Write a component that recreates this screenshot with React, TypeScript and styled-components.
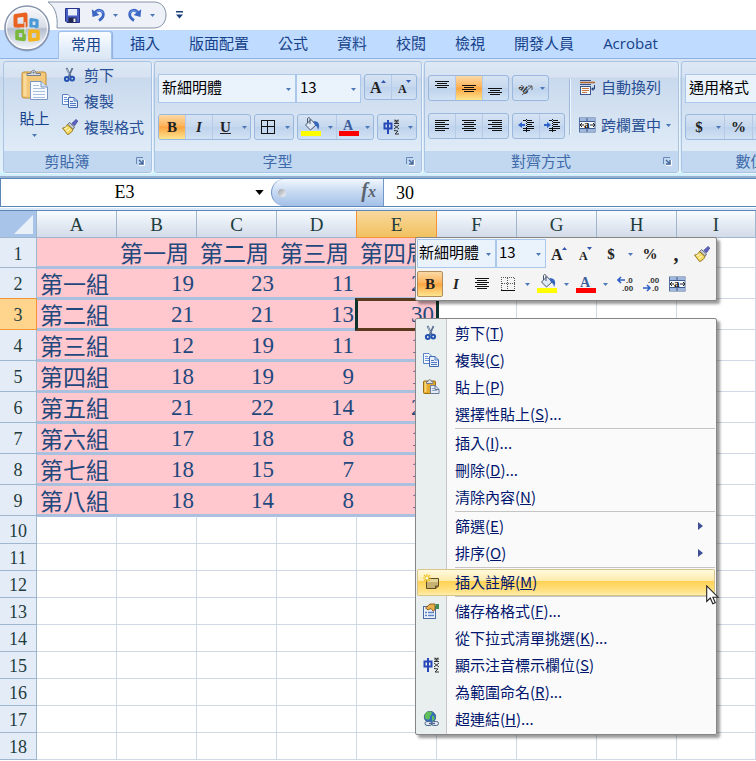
import React from "react";
import styled, { createGlobalStyle, css } from "styled-components";

const UI = '"Noto Sans CJK TC", "Open Sans", sans-serif';
const SERIF = '"Liberation Serif", "Noto Sans CJK TC", serif';

const GlobalStyle = createGlobalStyle`
  * { box-sizing: border-box; }
  body { margin: 0; background: #fff; font-family: ${UI}; font-size: 15px; line-height: 20px; overflow: hidden; }
  button, input, select { font: inherit; color: inherit; margin: 0; padding: 0; border: 0; background: none; border-radius: 0; outline: none; }
  svg { display: block; flex: none; }
`;

/* ---------- frame ---------- */

const Page = styled.div`
  position: relative;
  min-height: 100vh;
  overflow: hidden;
`;

const TitleBar = styled.header`
  position: relative;
  height: 30px;
  display: flex;
  align-items: center;
  padding-left: 48px;
`;

const OfficeButton = styled.button`
  position: absolute;
  left: 3px;
  top: 4px;
  z-index: 2;
`;

const QuickAccess = styled.div`
  position: relative;
  width: 120px;
  height: 30px;
  display: flex;
  align-items: center;
  padding-left: 16px;
  > svg { position: absolute; left: 0; top: 1px; }
`;

const QuickButton = styled.button<{ $w: number }>`
  position: relative;
  display: flex;
  align-items: center;
  justify-content: center;
  width: ${(p) => p.$w}px;
  height: 24px;
`;

const Tabs = styled.nav`
  display: flex;
  gap: 1px;
  height: 29px;
  padding: 0 0 0 57px;
  background: #bfdbff;
  border-bottom: 1px solid #8db2e3;
`;

const Tab = styled.button<{ $active?: boolean; $latin?: boolean }>`
  height: 28px;
  padding: 0 14px 2px;
  color: #15428b;
  white-space: nowrap;
  ${(p) => p.$latin && css`font-family: "Open Sans", sans-serif;`}
  ${(p) =>
    p.$active &&
    css`
      margin: 1px 3px 0 1px;
      padding: 0 10px 4px 12px;
      border: 1px solid #9fc0ea;
      border-bottom: 0;
      border-radius: 3px 3px 0 0;
      background: linear-gradient(#fbfdff, #e4eefb 60%, #dbe6f4);
      box-shadow: 1px 0 1px #8fb0dc;
    `}
`;

const Ribbon = styled.div`
  display: flex;
  gap: 2px;
  padding: 2px 3px 1px;
  height: 119px;
  overflow: hidden;
  background: linear-gradient(#dbe6f4 0, #d5e1f2 17px, #c8d9ed 18px, #e3f2fb 112px, #c8f5ff 115px, #dbe9f8 117px, #94afd0 117px, #94afd0 119px);
`;

const GroupBox = styled.section<{ $min?: number }>`
  flex: none;
  display: flex;
  flex-direction: column;
  height: 112px;
  min-width: ${(p) => p.$min ?? 0}px;
  border: 1px solid #a9c4e2;
  border-radius: 3px;
  box-shadow: 1px 1px 0 #eef5fc;
  overflow: hidden;
  background: linear-gradient(#dee8f5 0, #d6e2f2 15px, #c9d9ed 16px, #dfebf7 89px);
`;

const GroupBody = styled.div<{ $top: number }>`
  flex: 1;
  display: flex;
  padding: ${(p) => p.$top}px 4px 0 3px;
`;

const GroupTitle = styled.div`
  display: flex;
  align-items: center;
  height: 21px;
  padding: 0 6px 1px 0;
  background: #c1d8f0;
  color: #3e6aaa;
  > span { flex: 1; text-align: center; margin-right: 6px; }
`;

const Launcher = styled.button`
  display: flex;
  align-items: center;
`;

const Stack = styled.div<{ $gap?: number }>`
  display: flex;
  flex-direction: column;
  gap: ${(p) => p.$gap ?? 0}px;
`;

const Row = styled.div<{ $gap?: number; $h?: number }>`
  display: flex;
  align-items: flex-start;
  gap: ${(p) => p.$gap ?? 0}px;
  ${(p) => p.$h && css`height: ${p.$h}px;`}
`;

const PasteButton = styled.button`
  display: flex;
  flex-direction: column;
  align-items: center;
  width: 55px;
  padding-top: 6px;
  color: #15428b;
  > span { margin: 7px 0 6px; }
`;

const SideButton = styled.button<{ $gap?: number }>`
  display: flex;
  align-items: center;
  gap: ${(p) => p.$gap ?? 6}px;
  height: 26px;
  padding-bottom: 2px;
  color: #284f94;
  white-space: nowrap;
`;

const Cluster = styled.div`
  display: flex;
  height: 26px;
  border: 1px solid #9ab8dd;
  border-radius: 3px;
  overflow: hidden;
  background: linear-gradient(#d6e3f3, #c6d8ee 50%, #bdd2ec 51%, #d2e2f4);
  > * + * { border-left: 1px solid #b4cae6; }
`;

const activeFill = css`
  background: linear-gradient(#fbd9a5, #fdb45c 45%, #fca440 50%, #fde58f);
`;

const Tool = styled.button<{ $w: number; $active?: boolean; $size?: number }>`
  display: flex;
  align-items: center;
  justify-content: center;
  width: ${(p) => p.$w}px;
  height: 24px;
  font-family: ${SERIF};
  font-size: ${(p) => p.$size ?? 15}px;
  font-weight: bold;
  color: #222;
  ${(p) => p.$active && activeFill}
`;

const Arrow = styled.button`
  && { border-left: 0; }
  display: flex;
  align-items: center;
  justify-content: center;
  width: 12px;
  height: 24px;
`;

const Combo = styled.div<{ $w: number; $pad?: number }>`
  position: relative;
  width: ${(p) => p.$w}px;
  height: 29px;
  border: 1px solid #abc7ec;
  background: #eaf2fb;
  color: #000;
  select { width: 100%; height: 23px; padding-left: ${(p) => p.$pad ?? 3}px; appearance: none; }
  svg { position: absolute; right: 4px; top: 13px; pointer-events: none; }
`;

const Divider = styled.div`
  width: 2px;
  height: 56px;
  margin: 4px 8px 0 4px;
  background: linear-gradient(90deg, #9fb9da 50%, #f0f6fd 50%);
`;

/* ---------- formula bar ---------- */

const FormulaBar = styled.div`
  display: flex;
  height: 29px;
  border: solid #5d87b8;
  border-width: 1px 0 1px 1px;
  background: #fff;
  font-family: ${SERIF};
  font-size: 18px;
  color: #000;
`;

const NameBox = styled.div`
  display: flex;
  align-items: center;
  width: 270px;
  input { flex: 1; min-width: 0; height: 27px; text-align: center; }
  button { width: 23px; height: 26px; display: flex; align-items: center; justify-content: center; }
`;

const FxStrip = styled.div`
  display: flex;
  align-items: center;
  justify-content: space-between;
  width: 113px;
  padding: 0 7px 0 6px;
  border: solid #6f97c8;
  border-width: 0 1px;
  border-radius: 14px 0 0 14px;
  background: linear-gradient(#f2f7fd, #c9dbf2 45%, #a3c0e8);
`;

const Knob = styled.i`
  width: 8px;
  height: 8px;
  border-radius: 4px;
  background: linear-gradient(135deg, #9aa0aa, #f6f8fa);
`;

const FxButton = styled.button`
  padding-bottom: 3px;
  font-family: ${SERIF};
  font-size: 20px;
  font-weight: bold;
  font-style: italic;
  color: #5b6470;
  small { font-size: 16px; }
`;

const FormulaInput = styled.input`
  flex: 1;
  min-width: 0;
  && { padding-left: 12px; }
`;

const Gutter = styled.div`
  height: 4px;
  background: #dbe8f8;
  border-bottom: 1px solid #5d87b8;
  border-top: 1px solid #fff;
`;

/* ---------- sheet ---------- */

const Sheet = styled.table`
  width: 100%;
  table-layout: fixed;
  border-collapse: separate;
  border-spacing: 0;
  line-height: 24px;
  th, td { padding: 0; overflow: visible; white-space: nowrap; }
`;

const HeadCol = styled.col` width: 37px; `;
const Col = styled.col` width: 80px; `;

const Corner = styled.th`
  height: 27px;
  background: #a9c4e9;
  border: solid #9eb6ce;
  border-width: 0 1px 1px 0;
  svg { margin: 2px 0 0 13px; }
`;

const ColHead = styled.th<{ $on?: boolean; $before?: boolean }>`
  font: 19px/24px ${SERIF};
  color: #1f3d3d;
  background: ${(p) => (p.$on ? "linear-gradient(#f9d99f, #f1c15f)" : "linear-gradient(#f8fcff, #e4ebf3 50%, #d3dbe9)")};
  border-right: 1px solid ${(p) => (p.$on || p.$before ? "#f29436" : "#9eb6ce")};
  border-bottom: 1px solid ${(p) => (p.$on ? "#f29436" : "#9eb6ce")};
  && { padding-top: 2px; }
`;

const RowHead = styled.th<{ $on?: boolean; $before?: boolean; $h: number }>`
  height: ${(p) => p.$h}px;
  font: 18px/24px ${SERIF};
  color: #1f3d3d;
  background: ${(p) => (p.$on ? "#ffd58d" : "#e4ecf7")};
  border-right: 1px solid ${(p) => (p.$on ? "#f29436" : "#9eb6ce")};
  border-bottom: 1px solid ${(p) => (p.$on || p.$before ? "#f29436" : "#9eb6ce")};
  && { padding-top: 2px; }
`;

const Cell = styled.td<{ $underData?: boolean }>`
  border: solid #d0d7e5;
  border-width: 0 1px 1px 0;
  ${(p) => p.$underData && css`border-top: 1px solid #a9c1df;`}
`;

const DataCell = styled.td<{ $kind: "text" | "number"; $first?: boolean }>`
  position: relative;
  background: #ffc7ce;
  color: #1f497d;
  border-bottom: 2px solid #a9c1df;
  border-top: ${(p) => (p.$first ? 0 : 1)}px solid #a9c1df;
  ${(p) =>
    p.$kind === "number"
      ? css`font: 23px/24px ${SERIF}; text-align: right; && { padding: 1px 3px 0 0; }`
      : css`font: 23px/24px ${UI}; && { padding: 0 0 0 3px; }`}
`;

const Selection = styled.i`
  position: absolute;
  left: -2px;
  right: -2px;
  top: -2px;
  bottom: -3px;
  border: 3px solid #0b332d;
  border-top-color: #5a3a1e;
  border-bottom-color: #5a3a1e;
  z-index: 1;
`;

/* ---------- floating panels ---------- */

const MiniToolbar = styled.div`
  position: absolute;
  left: 415px;
  top: 237px;
  z-index: 3;
  width: 302px;
  padding: 1px;
  border: 1px solid #868686;
  border-radius: 2px;
  background: #f4f4f4;
  box-shadow: 3px 3px 3px rgba(0, 0, 0, 0.4);
  ${Tool} { height: 28px; }
  ${Arrow} { width: 13px; height: 28px; }
  ${Combo} { align-self: flex-start; }
`;

const MiniRow = styled.div`
  display: flex;
  align-items: center;
  height: 30px;
`;

const MiniActive = styled(Tool)`
  && { height: 26px; border: 1px solid #b08d5a; border-radius: 2px; }
`;

const Menu = styled.div`
  position: absolute;
  left: 415px;
  top: 318px;
  z-index: 3;
  width: 302px;
  padding: 1px;
  border: 1px solid #868686;
  border-radius: 2px;
  background: linear-gradient(90deg, #e9eeee 30px, #c5c5c5 30px, #c5c5c5 31px, #fafafa 31px);
  box-shadow: 3px 3px 3px rgba(0, 0, 0, 0.4);
`;

const MenuItem = styled.button<{ $hot?: boolean }>`
  position: relative;
  display: flex;
  align-items: center;
  width: 100%;
  height: 27px;
  padding-bottom: 2px;
  color: #00156e;
  text-align: left;
  ${(p) =>
    p.$hot &&
    css`
      background: linear-gradient(#fffbe4, #ffeaa8 45%, #ffd253 46%, #ffe38c 85%, #fff3b5);
      box-shadow: inset 0 0 0 1px #d9c48b;
      border-radius: 2px;
    `}
`;

const MenuIcon = styled.span`
  width: 38px;
  padding-left: 6px;
`;

const MenuLabel = styled.span`
  flex: 1;
`;

const SubArrow = styled.span`
  margin-right: 12px;
`;

const MenuRule = styled.hr`
  height: 2px;
  margin: 0 0 0 38px;
  border: 0;
  border-top: 1px solid #c5c5c5;
`;

const Pointer = styled.span`
  position: absolute;
  right: -4px;
  top: 16px;
  z-index: 4;
`;

/* ---------- icons ---------- */

const Caret = ({ color = "#4a78b8", w = 5 }: { color?: string; w?: number }) => (
  <svg width={w} height={w === 5 ? 3 : 5} viewBox="0 0 10 6"><path d="M0 0H10L5 6Z" fill={color} /></svg>
);

const CutIcon = () => (
  <svg width="16" height="16" viewBox="0 0 16 16" fill="none">
    <path d="M4.500 1L9 10M10.500 1L6.500 10" stroke="#5a6f90" strokeWidth="1.800" />
    <path d="M5 2L7.200 7" stroke="#c3cede" strokeWidth=".8" />
    <circle cx="4.800" cy="12" r="1.900" stroke="#2452b0" strokeWidth="2" />
    <circle cx="10.200" cy="11.600" r="1.900" stroke="#2452b0" strokeWidth="2" />
  </svg>
);

const CopyIcon = () => (
  <svg width="16" height="16" viewBox="0 0 16 16">
    <path d="M.5 1.500H6L8.500 4V11.500H.5Z" fill="#f4f8ff" stroke="#5b82c4" />
    <path d="M2 4.500H5M2 6.500H6M2 8.500H6" stroke="#6d94d4" />
    <path d="M6.500 4.500H12L15.500 8V14.500H6.500Z" fill="#e8f0ff" stroke="#3f68b0" />
    <path d="M12 4.500V8H15.500M8 8.500H11M8 10.500H14M8 12.500H14" stroke="#4f7ac2" fill="none" />
  </svg>
);

const BrushIcon = () => (
  <svg width="16" height="16" viewBox="0 0 16 16">
    <path d="M14 .5L15.800 2L12.500 6.800L9.800 4.500Z" fill="#5a5fc0" stroke="#474a9a" strokeWidth=".8" />
    <path d="M7.500 3.500L12.500 8L11 10.500L5.500 5.500Z" fill="#c3c8d1" stroke="#5f6470" strokeWidth=".9" />
    <path d="M5.500 5.500L11 10.500C10 13 8 15 5.500 15.500L.5 9C3 8.800 4.500 7.500 5.500 5.500Z" fill="#f3d75f" stroke="#8d6c14" strokeWidth=".9" />
    <path d="M2.500 9.800L5.500 8.300M4.500 12.500L8 10" stroke="#fff6bf" strokeWidth="1.400" />
  </svg>
);

const PasteBigIcon = () => (
  <svg width="28" height="32" viewBox="0 0 28 32">
    <rect x="1" y="3" width="24" height="26" rx="2" fill="#f3c878" stroke="#c08d38" />
    <rect x="2.500" y="5" width="3" height="22" fill="#f9dc9c" />
    <path d="M6 6.500V4.500H10C10 .2 15 .2 15 4.500H19.500V6.500Z" fill="#d5dce6" stroke="#77808d" />
    <circle cx="12.500" cy="3.500" r="1" fill="#6b7480" />
    <path d="M9.500 12.500H20L26.500 18V30.500H9.500Z" fill="#f7faff" stroke="#7b97c2" />
    <path d="M20 12.500V18H26.500" fill="#d6e3f6" stroke="#7b97c2" />
    <path d="M12 16.500H18M12 19.500H24M12 22.500H24M12 25.500H24M12 28.500H24" stroke="#a9bfe0" />
  </svg>
);

const PasteIcon = () => (
  <svg width="17" height="16" viewBox="0 0 17 16">
    <rect x=".5" y="2" width="12" height="12.500" rx="1" fill="#e5ab2e" stroke="#9c6d12" />
    <rect x="1.500" y="3" width="2" height="10" fill="#f9d878" />
    <path d="M3.500 4.500V2.500H5C5 .2 8.500 .2 8.500 2.500H10V4.500Z" fill="#dfe3e8" stroke="#6f7276" strokeWidth=".9" />
    <path d="M7.500 6.500H12L16 10.500V14.500H7.500Z" fill="#e6ecf6" stroke="#6a7c9c" />
    <path d="M9 9.500H12M9 11.500H14" stroke="#92a3c0" />
    <path d="M12 6.500V10.500H16" fill="none" stroke="#6a7c9c" />
  </svg>
);

const SaveIcon = () => (
  <svg width="15" height="15" viewBox="0 0 15 15">
    <path d="M.5 .5H14.500V14.500H2L.5 13Z" fill="#4a5fc4" stroke="#27338a" />
    <rect x="3" y="1" width="9" height="6.500" fill="#e9effc" />
    <rect x="3.500" y="9.500" width="8" height="5" fill="#22264a" />
    <rect x="8.500" y="10.500" width="2" height="3.500" fill="#e9effc" />
  </svg>
);

const UndoIcon = ({ flip }: { flip?: boolean }) => (
  <svg width="15" height="14" viewBox="0 0 15 14">
    <g transform={flip ? "translate(15 0) scale(-1 1)" : undefined}>
      <path d="M4 5C6 1 12 1.500 12.300 6C12.500 8.500 10.500 11 8 12.500" fill="none" stroke="#3b66c4" strokeWidth="2.800" />
      <path d="M.8 1.300L1.500 9L8.500 7Z" fill="#3b66c4" />
      <path d="M5 4.500C7 2 11 2.200 11.800 5" fill="none" stroke="#8fb2ee" strokeWidth=".8" />
    </g>
  </svg>
);

const OfficeLogo = () => (
  <svg width="48" height="48" viewBox="0 0 48 48">
    <defs>
      <linearGradient id="orb" x1="0" y1="0" x2="0" y2="1">
        <stop offset="0" stopColor="#fafbfd" />
        <stop offset=".48" stopColor="#d8dde7" />
        <stop offset=".52" stopColor="#b4becf" />
        <stop offset="1" stopColor="#f6f9fd" />
      </linearGradient>
    </defs>
    <circle cx="24" cy="25" r="22.500" fill="#6f87ab" opacity=".55" />
    <circle cx="24" cy="24" r="22" fill="url(#orb)" stroke="#8795ae" strokeWidth="1.500" />
    <circle cx="24" cy="24" r="20.500" fill="none" stroke="#fff" strokeWidth="1.200" opacity=".8" />
    <g fill="none" strokeWidth="4" strokeLinejoin="round">
      <path d="M12.500 12L22.500 10.500V22L12.500 21.500Z" stroke="#e9621f" />
      <path d="M28 15.500L34 16.500V22.500L28 22.500Z" stroke="#4b9ad6" strokeWidth="3.200" />
      <path d="M14 27.500L21 27V35.500L14 34.500Z" stroke="#7ab83c" strokeWidth="3.600" />
      <path d="M27 27L35 27.500V35L27 36Z" stroke="#f3b51f" strokeWidth="3.600" />
    </g>
    <path d="M22 18V30M17 24H32" stroke="#e4e8ef" strokeWidth="1.200" />
  </svg>
);

type AlignKind = "left" | "center" | "right";
const Lines = ({ kind = "center", rows = 6, dy = 0 }: { kind?: AlignKind; rows?: number; dy?: number }) => (
  <svg width="15" height="15" viewBox="0 0 15 15" shapeRendering="crispEdges">
    {Array.from({ length: rows }, (_, i) => {
      const w = i % 2 ? 10 : 14;
      const x = kind === "left" ? 0 : kind === "right" ? 14 - w : (14 - w) >> 1;
      return <rect key={i} x={x} y={i * 2 + 1 + dy} width={w} height="1" fill="#111" />;
    })}
  </svg>
);

const IndentIcon = ({ out }: { out?: boolean }) => (
  <svg width="17" height="14" viewBox="0 0 17 14" shapeRendering="crispEdges">
    <path d="M5 1.500H8M9 1.500H14M9 3.500H16M9 5.500H14M9 7.500H16M5 9.500H16M5 11.500H12" stroke="#111" />
    <path d="M8.500 0V14" stroke="#111" strokeDasharray="1 1" />
    <path d={out ? "M7 6H3" : "M0 6H4"} stroke="#2f62c8" strokeWidth="2" />
    <path d={out ? "M4 3L0 6L4 9Z" : "M3 3L7 6L3 9Z"} fill="#2f62c8" shapeRendering="auto" />
  </svg>
);

const OrientationIcon = () => (
  <svg width="17" height="16" viewBox="0 0 17 16">
    <text x="2" y="8" fontFamily="Liberation Serif" fontSize="10" fontWeight="bold" fill="#333" transform="rotate(40 2 8)">ab</text>
    <path d="M6 15L16 6M16 10V6H12" fill="none" stroke="#555" />
  </svg>
);

const WrapIcon = () => (
  <svg width="17" height="16" viewBox="0 0 17 16">
    <path d="M1 1.500H12M1 5.500H12" stroke="#3a5488" />
    <path d="M1 3.500H16" stroke="#b5652b" strokeWidth="1.500" />
    <rect x="1.500" y="7.500" width="10" height="8" fill="#f4f8ff" stroke="#3a5488" />
    <path d="M3 9.500H10M3 11.500H10M3 13.500H8" stroke="#c2763d" />
    <path d="M15.500 6V10H13" fill="none" stroke="#27407a" />
    <path d="M14.500 8L12 10L14.500 12Z" fill="#27407a" />
  </svg>
);

const MergeIcon = () => (
  <svg width="17" height="16" viewBox="0 0 17 16">
    <rect x=".5" y="1" width="15.500" height="14" fill="#f7faff" stroke="#55709f" />
    <path d="M1 1.500H16V4H1ZM1 12H16V14.500H1Z" fill="#9db7dd" />
    <path d="M.5 4.500H16M.5 11.500H16M8 1V4.500M8 11.500V15" stroke="#3f5a8c" />
    <path d="M1 8H5M11 8H16M3 6L1 8L3 10M14 6L16 8L14 10" fill="none" stroke="#222" />
    <text x="5" y="11" fontFamily="Liberation Serif" fontSize="11" fontWeight="bold" fill="#111">a</text>
  </svg>
);

const BorderIcon = ({ dotted }: { dotted?: boolean }) => (
  <svg width="14" height="14" viewBox="0 0 14 14" fill="none" shapeRendering="crispEdges">
    <path d="M.5 13V.5H13.500V13M6.500 .5V13M.5 6.500H13.500" stroke={dotted ? "#555" : "#111"} strokeDasharray={dotted ? "1 1" : undefined} />
    <path d="M0 13.500H14" stroke="#111" />
  </svg>
);

const BucketIcon = () => (
  <svg width="20" height="20" viewBox="0 0 20 20">
    <path d="M4.500 8L10 2.500L15 8L9.500 13Z" fill="#dfe8f5" stroke="#47546c" />
    <path d="M9 7V2C9 0 6.500 0 6.500 2V6" fill="none" stroke="#47546c" />
    <path d="M12.500 4C18 4 19.500 8 17 13C16.500 10 15.500 9 14 8.500Z" fill="#3767bb" />
    <rect x="0" y="14" width="20" height="5" fill="#ff0" />
  </svg>
);

const FontColorIcon = () => (
  <svg width="20" height="20" viewBox="0 0 20 20">
    <text x="4" y="13" fontFamily="Liberation Serif" fontSize="14" fontWeight="bold" fill="#3b5c9c">A</text>
    <rect x="0" y="14" width="20" height="5" fill="#f00" />
  </svg>
);

const PhoneticIcon = () => (
  <svg width="17" height="16" viewBox="0 0 17 16" fill="none">
    <path d="M5 1V15M1.500 4.500H8.500V9.500H1.500Z" stroke="#2747b8" strokeWidth="2" />
    <path d="M11 2H16M11 4.500H16M12 .5L15 5M15 .5L12 5M11 6L16 10M16 6L11 10M11 11.500L15 12L12 15H16" stroke="#333" />
  </svg>
);

const DecimalIcon = ({ more }: { more?: boolean }) => (
  <svg width="17" height="18" viewBox="0 0 17 18">
    <text x={more ? 9 : 5} y="8" fontFamily="Liberation Sans" fontSize="8" fontWeight="bold" fill="#333">{more ? ".0" : ".00"}</text>
    <text x={more ? 5 : 9} y="16" fontFamily="Liberation Sans" fontSize="8" fontWeight="bold" fill="#333">{more ? ".00" : ".0"}</text>
    <path d={more ? "M8 5H2M4 2L1 5L4 8" : "M0 13H6M4 10L7 13L4 16"} fill="none" stroke="#2f62c8" strokeWidth="1.600" />
  </svg>
);

const CommentIcon = () => (
  <svg width="17" height="16" viewBox="0 0 17 16">
    <path d="M3.500 4.500H15.500V12L13 14.500H3.500Z" fill="#c7b172" stroke="#5d4d23" />
    <path d="M4 5H15V8H4Z" fill="#e6d798" />
    <path d="M12.500 14.500V12H15.500" fill="#8f7a3e" stroke="#5d4d23" />
    <path d="M4 0V8M0 4H8M1 1L7 7M7 1L1 7" stroke="#f0c020" strokeWidth="1.100" />
    <circle cx="4" cy="4" r="1.500" fill="#fffbd0" />
  </svg>
);

const FormatIcon = () => (
  <svg width="17" height="16" viewBox="0 0 17 16">
    <rect x=".5" y="3.500" width="12" height="12" fill="#eef4fc" stroke="#4a6aa6" />
    <path d="M2 9.500H4M5 9.500H11M2 12.500H4M5 12.500H11" stroke="#5b82c4" strokeWidth="1.400" />
    <path d="M2.500 5L7 1L12 1V6L10.500 8.500L8 5.500L5 7Z" fill="#e8b04c" stroke="#80541a" strokeWidth=".9" />
    <rect x="12.500" y="1" width="3.500" height="5" fill="#3f8a57" />
  </svg>
);

const LinkIcon = () => (
  <svg width="17" height="16" viewBox="0 0 17 16" fill="none">
    <circle cx="7" cy="6" r="5.700" fill="#2f6fbd" stroke="#4d6f8f" />
    <path d="M2 3C4 0 8 0 9 2C8 5 6 5 7 7C6 10 3 8 2 7ZM9 5C11 4 12 6 11 9L9 10Z" fill="#5fc05a" />
    <rect x="2" y="10.500" width="7" height="4" rx="2" fill="#dfe8f3" stroke="#50698f" />
    <rect x="8.500" y="10.500" width="7" height="4" rx="2" fill="#dfe8f3" stroke="#50698f" />
    <path d="M6 12.500H12" stroke="#50698f" strokeWidth="1.400" />
  </svg>
);

const LauncherIcon = () => (
  <svg width="9" height="9" viewBox="0 0 9 9" fill="none">
    <path d="M.5 7V.5H7" stroke="#6889b4" />
    <path d="M8.500 3V8.500H3" stroke="#fff" />
    <path d="M3 3L7 7M7 3V7H3" stroke="#49699a" strokeWidth="1.400" />
  </svg>
);

const PointerIcon = () => (
  <svg width="13" height="20" viewBox="0 0 13 20">
    <path d="M.7 .9V16.500L4.300 13L6.800 18.800L9.300 17.700L6.900 12.200H12Z" fill="#fff" stroke="#222" strokeWidth="1.100" />
  </svg>
);

const Grow = ({ down }: { down?: boolean }) => (
  <svg width="18" height="20" viewBox="0 0 18 20">
    <text x={down ? 3 : 1} y="16" fontFamily="Liberation Serif" fontSize={down ? 12 : 16} fontWeight="bold" fill="#222">A</text>
    <path d={down ? "M11 3H16L13.500 6Z" : "M12 6H17L14.500 3Z"} fill="#3355b0" />
  </svg>
);

/* ---------- composed parts ---------- */

const Group = ({ title, top, min, children }: { title: string; top: number; min?: number; children: React.ReactNode }) => (
  <GroupBox $min={min} aria-label={title}>
    <GroupBody $top={top}>{children}</GroupBody>
    <GroupTitle>
      <span>{title}</span>
      <Launcher aria-label={`${title}設定`}><LauncherIcon /></Launcher>
    </GroupTitle>
  </GroupBox>
);

const Select = ({ label, value, w, pad }: { label: string; value: string; w: number; pad?: number }) => (
  <Combo $w={w} $pad={pad}>
    <select aria-label={label} defaultValue={value}><option>{value}</option></select>
    <Caret />
  </Combo>
);

const More = ({ label }: { label: string }) => <Arrow aria-label={label}><Caret /></Arrow>;

const tabs = ["常用", "插入", "版面配置", "公式", "資料", "校閱", "檢視", "開發人員", "Acrobat"];
const columns = ["A", "B", "C", "D", "E", "F", "G", "H", "I"];
const data: (string | number)[][] = [
  ["", "第一周", "第二周", "第三周", "第四周"],
  ["第一組", 19, 23, 11, 22],
  ["第二組", 21, 21, 13, 30],
  ["第三組", 12, 19, 11, 15],
  ["第四組", 18, 19, 9, 15],
  ["第五組", 21, 22, 14, 20],
  ["第六組", 17, 18, 8, 14],
  ["第七組", 18, 15, 7, 12],
  ["第八組", 18, 14, 8, 13],
];
const rowHeight = (n: number) => (n === 1 ? 30 : n < 10 ? 31 : n === 10 ? 28 : 27);

type Item = { text: string; key: string; tail?: string; icon?: React.ReactNode; sub?: boolean; hot?: boolean };
const menu: Item[][] = [
  [
    { text: "剪下", key: "T", icon: <CutIcon /> },
    { text: "複製", key: "C", icon: <CopyIcon /> },
    { text: "貼上", key: "P", icon: <PasteIcon /> },
    { text: "選擇性貼上", key: "S", tail: "..." },
  ],
  [
    { text: "插入", key: "I", tail: "..." },
    { text: "刪除", key: "D", tail: "..." },
    { text: "清除內容", key: "N" },
  ],
  [
    { text: "篩選", key: "E", sub: true },
    { text: "排序", key: "O", sub: true },
  ],
  [{ text: "插入註解", key: "M", icon: <CommentIcon />, hot: true }],
  [
    { text: "儲存格格式", key: "F", tail: "...", icon: <FormatIcon /> },
    { text: "從下拉式清單挑選", key: "K", tail: "..." },
    { text: "顯示注音標示欄位", key: "S", icon: <PhoneticIcon /> },
    { text: "為範圍命名", key: "R", tail: "..." },
    { text: "超連結", key: "H", tail: "...", icon: <LinkIcon /> },
  ],
];

const TopBar = () => (
  <TitleBar>
    <OfficeButton aria-label="Office"><OfficeLogo /></OfficeButton>
    <QuickAccess>
      <svg width="120" height="28" viewBox="0 0 120 28">
        <path d="M0 1H106C122 1 122 27 106 27H9C10 14 7 6 0 1Z" fill="#eef2f8" stroke="#8592a6" />
      </svg>
      <QuickButton $w={17} aria-label="儲存檔案"><SaveIcon /></QuickButton>
      <QuickButton $w={34} aria-label="復原"><UndoIcon /></QuickButton>
      <QuickButton $w={1} aria-label="復原清單"><Caret /></QuickButton>
      <QuickButton $w={36} aria-label="取消復原"><UndoIcon flip /></QuickButton>
      <QuickButton $w={1} aria-label="取消復原清單"><Caret /></QuickButton>
    </QuickAccess>
    <QuickButton $w={22} aria-label="自訂快速存取工具列">
      <svg width="7" height="8" viewBox="0 0 7 8"><path d="M0 0H7V1.500H0ZM0 3.500H7L3.500 7.500Z" fill="#1c3f7c" /></svg>
    </QuickButton>
  </TitleBar>
);

const RibbonArea = () => (
  <Ribbon>
    <Group title="剪貼簿" top={1} min={149}>
      <PasteButton><PasteBigIcon /><span>貼上</span><Caret /></PasteButton>
      <Stack>
        <SideButton><CutIcon />剪下</SideButton>
        <SideButton><CopyIcon />複製</SideButton>
        <SideButton><BrushIcon />複製格式</SideButton>
      </Stack>
    </Group>
    <Group title="字型" top={12} min={268}>
      <Stack $gap={11}>
        <Row $h={29} $gap={3}>
          <Row>
            <Select label="字型" value="新細明體" w={138} />
            <Select label="字型大小" value="13" w={65} />
          </Row>
          <Cluster>
            <Tool $w={26} aria-label="放大字型"><Grow /></Tool>
            <Tool $w={25} aria-label="縮小字型"><Grow down /></Tool>
          </Cluster>
        </Row>
        <Row $gap={3}>
          <Cluster>
            <Tool $w={26} $active aria-label="粗體">B</Tool>
            <Tool $w={27} aria-label="斜體"><em>I</em></Tool>
            <Tool $w={26} aria-label="底線"><u>U</u></Tool>
            <More label="底線樣式" />
          </Cluster>
          <Cluster>
            <Tool $w={26} aria-label="框線"><BorderIcon /></Tool>
            <More label="框線樣式" />
          </Cluster>
          <Cluster>
            <Tool $w={26} aria-label="填滿色彩"><BucketIcon /></Tool>
            <More label="填滿色彩清單" />
            <Tool $w={25} aria-label="字型色彩"><FontColorIcon /></Tool>
            <More label="字型色彩清單" />
          </Cluster>
          <Cluster>
            <Tool $w={26} aria-label="注音標示"><PhoneticIcon /></Tool>
            <More label="注音標示清單" />
          </Cluster>
        </Row>
      </Stack>
    </Group>
    <Group title="對齊方式" top={13} min={255}>
      <Stack $gap={12}>
        <Row $gap={3}>
          <Cluster>
            <Tool $w={26} aria-label="靠上對齊"><Lines rows={4} dy={-1} /></Tool>
            <Tool $w={27} $active aria-label="置中垂直對齊"><Lines rows={4} dy={3} /></Tool>
            <Tool $w={26} aria-label="靠下對齊"><Lines rows={4} dy={6} /></Tool>
          </Cluster>
          <Cluster>
            <Tool $w={23} aria-label="方向"><OrientationIcon /></Tool>
            <More label="方向清單" />
          </Cluster>
        </Row>
        <Row $gap={3}>
          <Cluster>
            <Tool $w={26} aria-label="靠左對齊"><Lines kind="left" /></Tool>
            <Tool $w={27} aria-label="置中"><Lines /></Tool>
            <Tool $w={26} aria-label="靠右對齊"><Lines kind="right" /></Tool>
          </Cluster>
          <Cluster>
            <Tool $w={26} aria-label="減少縮排"><IndentIcon out /></Tool>
            <Tool $w={25} aria-label="增加縮排"><IndentIcon /></Tool>
          </Cluster>
        </Row>
      </Stack>
      <Divider />
      <Stack $gap={12}>
        <SideButton $gap={5}><WrapIcon />自動換列</SideButton>
        <SideButton $gap={5}><MergeIcon />跨欄置中<Caret /></SideButton>
      </Stack>
    </Group>
    <Group title="數值" top={12} min={160}>
      <Stack $gap={11}>
        <Select label="數值格式" value="通用格式" w={148} />
        <Cluster>
          <Tool $w={26} aria-label="會計數字格式">$</Tool>
          <More label="會計數字格式清單" />
          <Tool $w={28} aria-label="百分比樣式">%</Tool>
          <Tool $w={26} aria-label="千分位樣式">,</Tool>
        </Cluster>
      </Stack>
    </Group>
  </Ribbon>
);

const Grid = () => (
  <Sheet>
    <colgroup>
      <HeadCol />
      {columns.slice(0, -1).map((c) => <Col key={c} />)}
      <col />
    </colgroup>
    <thead>
      <tr>
        <Corner><svg width="20" height="20" viewBox="0 0 20 20"><path d="M20 0V19H1Z" fill="#eaf0f8" /></svg></Corner>
        {columns.map((c) => <ColHead key={c} $on={c === "E"} $before={c === "D"}>{c}</ColHead>)}
      </tr>
    </thead>
    <tbody>
      {Array.from({ length: 18 }, (_, i) => {
        const n = i + 1;
        return (
          <tr key={n}>
            <RowHead $h={rowHeight(n)} $on={n === 3} $before={n === 2}>{n}</RowHead>
            {columns.map((c, j) =>
              n <= 9 && j < 5 ? (
                <DataCell key={c} $first={n === 1} $kind={typeof data[i][j] === "number" ? "number" : "text"}>
                  {data[i][j]}
                  {n === 3 && c === "E" && <Selection />}
                </DataCell>
              ) : (
                <Cell key={c} $underData={n === 10 && j < 5} />
              )
            )}
          </tr>
        );
      })}
    </tbody>
  </Sheet>
);

const FloatingToolbar = () => (
  <MiniToolbar role="toolbar">
    <MiniRow>
      <Select label="字型" value="新細明體" w={79} pad={1} />
      <Select label="字型大小" value="13" w={50} pad={2} />
      <Tool $w={26} aria-label="放大字型"><Grow /></Tool>
      <Tool $w={26} aria-label="縮小字型"><Grow down /></Tool>
      <Tool $w={26}>$</Tool>
      <More label="貨幣清單" />
      <Tool $w={26}>%</Tool>
      <Tool $w={26} $size={20}>,</Tool>
      <Tool $w={26} aria-label="複製格式"><BrushIcon /></Tool>
    </MiniRow>
    <MiniRow>
      <MiniActive $w={26} $active>B</MiniActive>
      <Tool $w={26}><em>I</em></Tool>
      <Tool $w={26} aria-label="置中"><Lines /></Tool>
      <Tool $w={26} aria-label="框線"><BorderIcon dotted /></Tool>
      <More label="框線清單" />
      <Tool $w={26} aria-label="填滿色彩"><BucketIcon /></Tool>
      <More label="填滿清單" />
      <Tool $w={26} aria-label="字型色彩"><FontColorIcon /></Tool>
      <More label="字型色彩清單" />
      <Tool $w={26} aria-label="增加小數位數"><DecimalIcon more /></Tool>
      <Tool $w={26} aria-label="減少小數位數"><DecimalIcon /></Tool>
      <Tool $w={26} aria-label="跨欄置中"><MergeIcon /></Tool>
    </MiniRow>
  </MiniToolbar>
);

const ContextMenu = () => (
  <Menu role="menu">
    {menu.map((section, s) => (
      <React.Fragment key={s}>
        {s > 0 && <MenuRule />}
        {section.map((m) => (
          <MenuItem key={m.text} role="menuitem" $hot={m.hot}>
            <MenuIcon>{m.icon}</MenuIcon>
            <MenuLabel>{m.text}(<u>{m.key}</u>){m.tail}</MenuLabel>
            {m.sub && <SubArrow><svg width="5" height="8" viewBox="0 0 5 8"><path d="M0 0L5 4L0 8Z" fill="#3f4f96" /></svg></SubArrow>}
            {m.hot && <Pointer><PointerIcon /></Pointer>}
          </MenuItem>
        ))}
      </React.Fragment>
    ))}
  </Menu>
);

export default function App() {
  return (
    <Page>
      <GlobalStyle />
      <TopBar />
      <Tabs>
        {tabs.map((t) => <Tab key={t} $active={t === "常用"} $latin={t === "Acrobat"}>{t}</Tab>)}
      </Tabs>
      <RibbonArea />
      <FormulaBar>
        <NameBox>
          <input aria-label="名稱方塊" defaultValue="E3" />
          <button aria-label="名稱清單"><Caret color="#000" w={9} /></button>
        </NameBox>
        <FxStrip>
          <Knob />
          <FxButton aria-label="插入函數">f<small>x</small></FxButton>
        </FxStrip>
        <FormulaInput aria-label="資料編輯列" defaultValue="30" />
      </FormulaBar>
      <Gutter />
      <Grid />
      <FloatingToolbar />
      <ContextMenu />
    </Page>
  );
}
